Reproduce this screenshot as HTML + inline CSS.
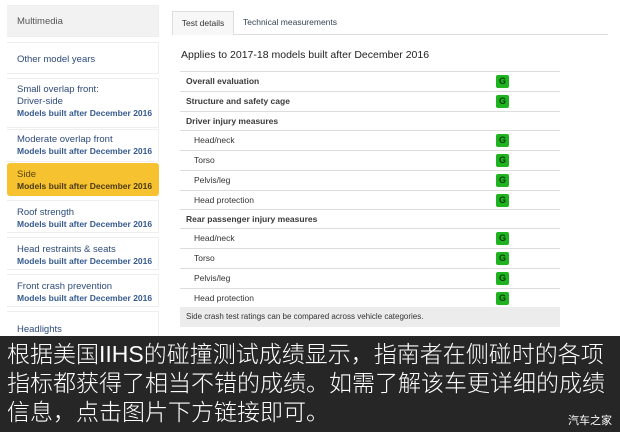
<!DOCTYPE html>
<html><head><meta charset="utf-8"><style>
*{margin:0;padding:0;box-sizing:border-box}
body{width:620px;height:432px;overflow:hidden;background:#fff;font-family:"Liberation Sans",sans-serif;position:relative}
.sb{position:absolute;left:7px;width:152px;font-size:9.5px;color:#2c4a7a;padding-left:10px;background:#fff;border:1px solid #eee;border-left:none}
.sb small{display:block;font-size:8.5px;line-height:11px;font-weight:bold;color:#355a8f}
.t{position:absolute;font-size:9.5px;color:#333}
.row{position:absolute;left:180px;width:380px;height:20px;border-top:1px solid #ddd;font-size:8.5px;color:#333;line-height:19px;padding-left:6px}
.row.b{font-weight:bold;color:#3a3a3a}
.row.i{padding-left:14px}
.g{position:absolute;left:316px;top:3px;width:13px;height:13px;background:#1fb31f;border-radius:2px;color:#0a3a0a;font-weight:bold;font-size:9px;line-height:13px;text-align:center}
.cap{position:absolute;left:0;top:336px;width:620px;height:96px;background:#262626;color:#fff;font-family:"Liberation Sans","Noto Sans CJK SC",sans-serif;font-size:23px;line-height:29px;padding:4px 0 0 7px;font-weight:300;letter-spacing:0px}
</style></head><body>
<div class="sb" style="top:5px;height:32px;background:#f2f2f2;line-height:32px;color:#555">Multimedia</div>
<div class="sb" style="top:42px;height:32px;line-height:34px">Other model years</div>
<div class="sb" style="top:78px;height:50px;padding-top:5px;line-height:12px">Small overlap front:<br>Driver-side<small>Models built after December 2016</small></div>
<div class="sb" style="top:129px;height:33px;padding-top:4px;line-height:12px">Moderate overlap front<small>Models built after December 2016</small></div>
<div class="sb" style="top:163px;height:33px;padding-top:6px;line-height:12px;background:#f6c22f;border-radius:3px;color:#4a3a10;border:none"><span style="color:#5a4510">Side</span><small style="color:#4a3a15">Models built after December 2016</small></div>
<div class="sb" style="top:200px;height:33px;padding-top:6px;line-height:12px">Roof strength<small>Models built after December 2016</small></div>
<div class="sb" style="top:237px;height:33px;padding-top:6px;line-height:12px">Head restraints &amp; seats<small>Models built after December 2016</small></div>
<div class="sb" style="top:274px;height:33px;padding-top:6px;line-height:12px">Front crash prevention<small>Models built after December 2016</small></div>
<div class="sb" style="top:311px;height:30px;padding-top:12px;line-height:12px">Headlights</div>
<div style="position:absolute;left:172px;top:34px;width:436px;border-top:1px solid #ddd"></div>
<div style="position:absolute;left:172px;top:11px;width:62px;height:24px;background:#f7f7f7;border:1px solid #ddd;border-bottom:none;font-size:8.5px;line-height:23px;text-align:center;color:#333">Test details</div>
<div class="t" style="left:243px;top:17px;font-size:8.5px;color:#345">Technical measurements</div>
<div class="t" style="left:181px;top:49px;font-size:10.5px;color:#222">Applies to 2017-18 models built after December 2016</div>
<div class="row b" style="top:71px">Overall evaluation<span class="g">G</span></div>
<div class="row b" style="top:91px">Structure and safety cage<span class="g">G</span></div>
<div class="row b" style="top:111px">Driver injury measures</div>
<div class="row i" style="top:130px">Head/neck<span class="g">G</span></div>
<div class="row i" style="top:150px">Torso<span class="g">G</span></div>
<div class="row i" style="top:170px">Pelvis/leg<span class="g">G</span></div>
<div class="row i" style="top:190px">Head protection<span class="g">G</span></div>
<div class="row b" style="top:209px">Rear passenger injury measures</div>
<div class="row i" style="top:228px">Head/neck<span class="g">G</span></div>
<div class="row i" style="top:248px">Torso<span class="g">G</span></div>
<div class="row i" style="top:268px">Pelvis/leg<span class="g">G</span></div>
<div class="row i" style="top:288px">Head protection<span class="g">G</span></div>
<div class="row" style="top:307px;background:#ececec;border:none;font-size:8px;line-height:20px">Side crash test ratings can be compared across vehicle categories.</div>
<div class="cap">根据美国IIHS的碰撞测试成绩显示，指南者在侧碰时的各项<br>指标都获得了相当不错的成绩。如需了解该车更详细的成绩<br>信息，点击图片下方链接即可。</div>
<div style="position:absolute;right:8px;top:412px;color:#fff;font-family:'Noto Sans CJK SC',sans-serif;font-size:11px">汽车之家</div>
</body></html>
